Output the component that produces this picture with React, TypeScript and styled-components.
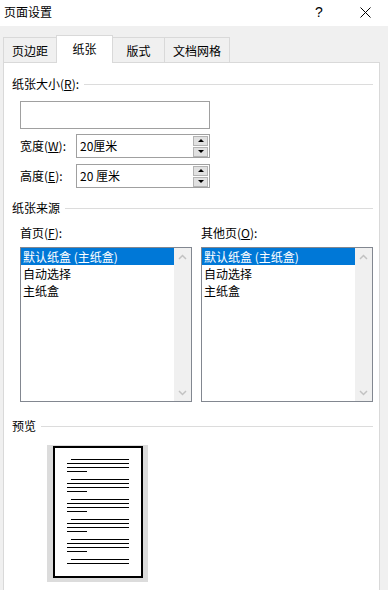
import styled, { createGlobalStyle } from "styled-components";

const GlobalStyle = createGlobalStyle`
  html, body {
    margin: 0;
    padding: 0;
  }
  body {
    font-family: "Noto Sans CJK SC", "Noto Sans", sans-serif;
    font-size: 12px;
    color: #000;
    background: #f0f0f0;
  }
`;

const tabs = ["页边距", "纸张", "版式", "文档网格"];
const trays = ["默认纸盒 (主纸盒)", "自动选择", "主纸盒"];
// preview paragraphs: number of lines in each
const paragraphs = [4, 4, 4, 4, 4, 2];

export default function App() {
  return (
    <Window>
      <GlobalStyle />
      <TitleBar>
        <Title>页面设置</Title>
        <CaptionButton aria-label="help">?</CaptionButton>
        <CaptionButton aria-label="close">
          <svg width="11" height="11" viewBox="0 0 11 11">
            <path d="M0.5 0.5 L10.5 10.5 M10.5 0.5 L0.5 10.5" stroke="#000" strokeWidth="1" />
          </svg>
        </CaptionButton>
      </TitleBar>

      <TabStrip>
        {tabs.map((t, i) => (
          <Tab key={t} $active={i === 1}>
            {t}
          </Tab>
        ))}
      </TabStrip>

      <Panel>
        <SectionHeader>
          <span>
            纸张大小(<u>R</u>):
          </span>
          <Rule />
        </SectionHeader>
        <PaperSizeBox />

        <FieldRow $top={5}>
          <FieldLabel>
            宽度(<u>W</u>):
          </FieldLabel>
          <SpinBox>
            <SpinText>20厘米</SpinText>
            <SpinButtons>
              <SpinButton>
                <Arrow $up />
              </SpinButton>
              <SpinButton>
                <Arrow />
              </SpinButton>
            </SpinButtons>
          </SpinBox>
        </FieldRow>
        <FieldRow $top={6}>
          <FieldLabel>
            高度(<u>E</u>):
          </FieldLabel>
          <SpinBox>
            <SpinText>20 厘米</SpinText>
            <SpinButtons>
              <SpinButton>
                <Arrow $up />
              </SpinButton>
              <SpinButton>
                <Arrow />
              </SpinButton>
            </SpinButtons>
          </SpinBox>
        </FieldRow>

        <SectionHeader $top={12}>
          <span>纸张来源</span>
          <Rule />
        </SectionHeader>
        <Columns>
          {[
            { label: "首页", key: "F" },
            { label: "其他页", key: "O" },
          ].map((c) => (
            <div key={c.key}>
              <ColumnLabel>
                {c.label}(<u>{c.key}</u>):
              </ColumnLabel>
              <ListBox>
                <ListItems>
                  {trays.map((t, i) => (
                    <ListRow key={t} $selected={i === 0}>
                      {t}
                    </ListRow>
                  ))}
                </ListItems>
                <ScrollBar>
                  <ScrollArrow>
                    <svg width="9" height="6" viewBox="0 0 9 6">
                      <path d="M1 5 L4.5 1.5 L8 5" fill="none" stroke="#c2c2c2" strokeWidth="1.5" />
                    </svg>
                  </ScrollArrow>
                  <ScrollArrow>
                    <svg width="9" height="6" viewBox="0 0 9 6">
                      <path d="M1 1 L4.5 4.5 L8 1" fill="none" stroke="#c2c2c2" strokeWidth="1.5" />
                    </svg>
                  </ScrollArrow>
                </ScrollBar>
              </ListBox>
            </div>
          ))}
        </Columns>

        <SectionHeader $top={16}>
          <span>预览</span>
          <Rule />
        </SectionHeader>
        <PreviewFrame>
          <PreviewPage>
            {paragraphs.map((n, p) => (
              <Paragraph key={p}>
                {Array.from({ length: n }).map((_, i) => (
                  <PageLine key={i} $kind={i === 0 ? "indent" : i === 3 ? "short" : "full"} />
                ))}
              </Paragraph>
            ))}
          </PreviewPage>
        </PreviewFrame>
      </Panel>
    </Window>
  );
}

const Window = styled.div`
  width: 388px;
  height: 590px;
  overflow: hidden;
  display: flex;
  flex-direction: column;
  background: #f0f0f0;
`;

const TitleBar = styled.div`
  height: 26px;
  flex-shrink: 0;
  display: flex;
  align-items: center;
  background: #fff;
  padding-left: 4px;
`;

const Title = styled.span`
  line-height: 16px;
  margin-bottom: 2px;
  flex: 1;
`;

const CaptionButton = styled.div`
  width: 46px;
  height: 26px;
  display: flex;
  align-items: center;
  justify-content: center;
  font-family: "Liberation Sans", sans-serif;
  font-size: 14px;
  padding-bottom: 2px;
  box-sizing: border-box;
`;

const TabStrip = styled.div`
  height: 36px;
  flex-shrink: 0;
  display: flex;
  align-items: flex-end;
  padding-left: 3px;
`;

const Tab = styled.div<{ $active?: boolean }>`
  box-sizing: border-box;
  height: ${(p) => (p.$active ? 28 : 25)}px;
  min-width: ${(p) => (p.$active ? 57 : 53)}px;
  padding: 0 8px;
  margin-bottom: ${(p) => (p.$active ? -1 : 0)}px;
  display: flex;
  align-items: center;
  justify-content: center;
  border: 1px solid #d9d9d9;
  border-bottom: none;
  background: ${(p) => (p.$active ? "#fff" : "#f0f0f0")};
  position: relative;
  z-index: ${(p) => (p.$active ? 1 : 0)};
  padding-bottom: ${(p) => (p.$active ? 2 : 0)}px;

  & + & {
    margin-left: -1px;
  }
`;

const Panel = styled.div`
  flex: 1;
  display: flex;
  flex-direction: column;
  background: #fff;
  border: 1px solid #d9d9d9;
  border-bottom: none;
  margin: 0 8px 0 3px;
  padding: 13px 6px 0 8px;
`;

const SectionHeader = styled.div<{ $top?: number }>`
  display: flex;
  align-items: center;
  gap: 5px;
  height: 16px;
  line-height: 16px;
  margin-top: ${(p) => p.$top ?? 0}px;
`;

const Rule = styled.div`
  flex: 1;
  height: 1px;
  background: #dcdcdc;
`;

const PaperSizeBox = styled.div`
  width: 190px;
  height: 28px;
  box-sizing: border-box;
  border: 1px solid #a0a0a0;
  margin: 9px 0 0 8px;
`;

const FieldRow = styled.div<{ $top: number }>`
  display: flex;
  align-items: center;
  margin: ${(p) => p.$top}px 0 0 8px;
`;

const FieldLabel = styled.span`
  width: 56px;
  line-height: 16px;
`;

const SpinBox = styled.div`
  width: 134px;
  height: 24px;
  box-sizing: border-box;
  border: 1px solid #a0a0a0;
  display: flex;
  align-items: center;
  padding-left: 3px;
`;

const SpinText = styled.span`
  flex: 1;
  line-height: 16px;
`;

const SpinButtons = styled.div`
  display: flex;
  flex-direction: column;
  gap: 1px;
  margin-right: 1px;
`;

const SpinButton = styled.div`
  width: 15px;
  height: 10px;
  box-sizing: border-box;
  background: #e1e1e1;
  border: 1px solid #b4b4b4;
  display: flex;
  align-items: center;
  justify-content: center;
`;

const Arrow = styled.div<{ $up?: boolean }>`
  width: 0;
  height: 0;
  border-left: 3px solid transparent;
  border-right: 3px solid transparent;
  ${(p) => (p.$up ? "border-bottom: 3px solid #000;" : "border-top: 3px solid #000;")}
`;

const Columns = styled.div`
  display: grid;
  grid-template-columns: 172px 172px;
  column-gap: 9px;
  margin: 9px 0 0 8px;
`;

const ColumnLabel = styled.div`
  height: 16px;
  line-height: 16px;
`;

const ListBox = styled.div`
  margin-top: 6px;
  height: 155px;
  box-sizing: border-box;
  border: 1px solid #828790;
  display: flex;
`;

const ListItems = styled.div`
  flex: 1;
`;

const ListRow = styled.div<{ $selected?: boolean }>`
  height: 17px;
  line-height: 17px;
  padding-left: 2px;
  white-space: nowrap;
  background: ${(p) => (p.$selected ? "#0078d7" : "transparent")};
  color: ${(p) => (p.$selected ? "#fff" : "#000")};
`;

const ScrollBar = styled.div`
  width: 17px;
  background: #f0f0f0;
  display: flex;
  flex-direction: column;
  justify-content: space-between;
`;

const ScrollArrow = styled.div`
  height: 17px;
  display: flex;
  align-items: center;
  justify-content: center;
`;

const PreviewFrame = styled.div`
  width: 101px;
  height: 137px;
  box-sizing: border-box;
  margin: 11px 0 0 35px;
  padding: 1px 5px 4px 6px;
  background: #dcdcdc;
  display: flex;
`;

const PreviewPage = styled.div`
  flex: 1;
  background: #fff;
  border: 2px solid #000;
  padding: 11px 12px 0 12px;
  display: flex;
  flex-direction: column;
  gap: 7px;
`;

const Paragraph = styled.div`
  display: flex;
  flex-direction: column;
  gap: 3px;
`;

const PageLine = styled.div<{ $kind: "indent" | "full" | "short" }>`
  height: 1px;
  background: #000;
  margin-left: ${(p) => (p.$kind === "indent" ? 4 : 0)}px;
  width: ${(p) => (p.$kind === "short" ? "20px" : "auto")};
`;
